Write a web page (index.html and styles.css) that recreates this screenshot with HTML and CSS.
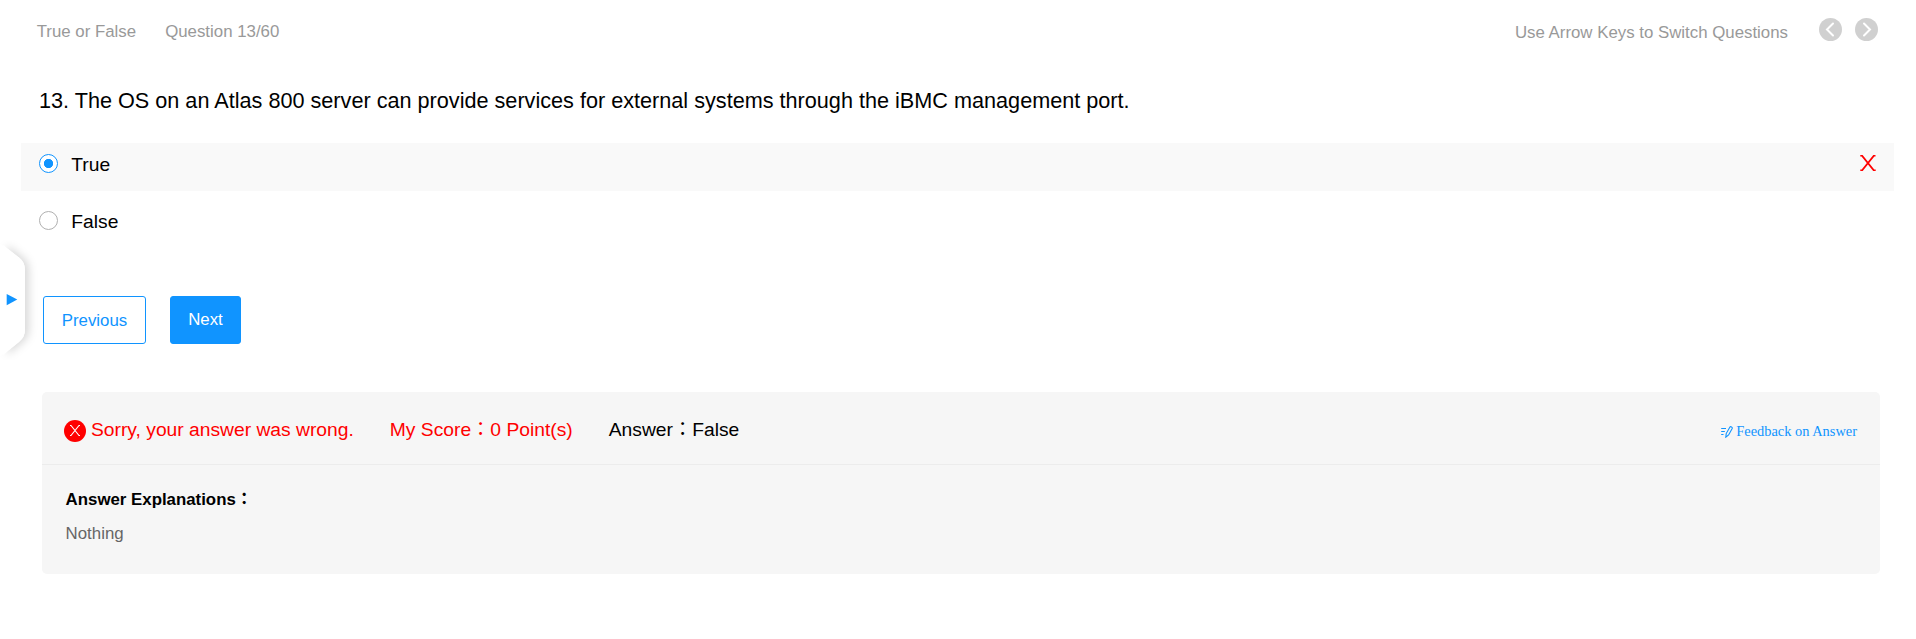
FILE: index.html
```html
<!DOCTYPE html>
<html lang="en">
<head>
<meta charset="utf-8">
<title>Question 13</title>
<link rel="stylesheet" href="styles.css">
</head>
<body>
<header class="topbar">
  <span class="kind">True or False</span>
  <span class="progress">Question 13/60</span>
  <span class="hint">Use Arrow Keys to Switch Questions</span>
  <nav class="arrows">
    <svg width="23" height="23" viewBox="0 0 23 23"><circle cx="11.5" cy="11.5" r="11.5"/><path d="M14 5.5L8 11.5L14 17.5"/></svg>
    <svg width="23" height="23" viewBox="0 0 23 23"><circle cx="11.5" cy="11.5" r="11.5"/><path d="M9 5.5L15 11.5L9 17.5"/></svg>
  </nav>
</header>
<main>
  <h1 class="question">13. The OS on an Atlas 800 server can provide services for external systems through the iBMC management port.</h1>
  <div class="options">
    <label class="option chosen">
      <i class="radio"></i><span>True</span>
      <svg class="cross" width="16" height="16" viewBox="0 0 16 16"><path d="M.3 .6H2L13.8 15.4H15.7M15.5 .6H13.9L2.1 15.4H.3"/></svg>
    </label>
    <label class="option second"><i class="radio"></i><span>False</span></label>
  </div>
  <div class="buttons">
    <button class="btn previous">Previous</button>
    <button class="btn next">Next</button>
  </div>
  <section class="result">
    <div class="summary">
      <svg class="wrong" width="22" height="22" viewBox="0 0 22 22"><circle cx="11" cy="11" r="11"/><path d="M6 5.5H7L15 15.5H16M16 5.5H15L7 15.5H6"/></svg>
      <span class="verdict">Sorry, your answer was wrong.</span>
      <span class="score">My Score：0 Point(s)</span>
      <span class="answer">Answer：False</span>
      <a class="feedback"><svg width="12" height="12" viewBox="0 0 12 12"><path d="M.2 2.5H5M.2 5.5H3.8M.2 8.5H2.5M4.8 11.2L5.2 7.6L8.8 1.2Q9.4 .3 10.5 .9Q11.6 1.5 11.2 2.5L7.6 9Z"/></svg><span>Feedback on Answer</span></a>
    </div>
    <div class="explain">
      <h2>Answer Explanations：</h2>
      <p>Nothing</p>
    </div>
  </section>
</main>
<aside class="drawer">
  <svg width="44" height="120" viewBox="0 0 44 120">
    <path class="tab" d="M3 5L19 17.5Q25 22 25 30V90Q25 97 19 102L3 115Z"/>
    <path class="tabface" d="M0 3L19 17.5Q25 22 25 30V90Q25 97 19 102L0 117Z"/>
    <path class="tri" d="M6.7 54L17.3 59.5L6.7 65.3Z"/>
  </svg>
</aside>
</body>
</html>
```
FILE: styles.css
```css
* { box-sizing: border-box; }
body { margin: 0; background: #fff; color: #000; font-family: "Liberation Sans", "Noto Sans CJK JP", sans-serif; height: 639px; overflow: hidden; position: relative; }
.topbar { display: flex; align-items: flex-start; padding: 18px 38px 0 36.7px; height: 62px; color: #999; font-size: 16.83px; line-height: 26px; }
.kind, .progress { padding-top: 1px; }
.progress { margin-left: 29px; }
.hint { margin-left: auto; padding-top: 2px; }
.arrows { display: flex; gap: 13px; margin-left: 31px; }
.arrows svg { fill: #d0d0d0; }
.arrows path { fill: none; stroke: #fff; stroke-width: 2; stroke-linecap: round; }
.question { margin: 0; padding: 24px 0 0 39px; height: 81px; font-size: 21.65px; font-weight: 400; line-height: 30px; }
.options { padding: 0 22px 0 21px; }
.option { display: flex; align-items: flex-start; height: 48px; padding: 11px 18px 0; font-size: 19.25px; line-height: 22px; }
.chosen { background: #f9f9f9; }
.second { margin-top: 9px; }
.radio { width: 19px; height: 19px; border: 1px solid #b0b0b0; border-radius: 50%; margin-right: 13.3px; background: #fff; }
.chosen .radio { border-color: #1094ff; background: radial-gradient(circle, #1094ff 4.3px, #fff 5px); }
.cross { margin: 1px 0 0 auto; fill: none; stroke: red; stroke-width: 1.7; }
.buttons { display: flex; gap: 24px; padding: 48px 0 0 43px; }
.btn { height: 48px; border: 1px solid #1094ff; border-radius: 3px; font: 16.83px "Liberation Sans", sans-serif; padding: 2px 0 0; }
.previous { width: 103px; background: #fff; color: #1094ff; }
.next { width: 71px; background: #1094ff; color: #fff; padding: 0; }
.result { margin: 48px 36px 0 42px; height: 182px; background: #f6f6f6; border-radius: 5px; }
.summary { display: flex; align-items: flex-start; height: 73px; border-bottom: 1px solid #ececec; padding: 26px 23px 0 22px; font-size: 19.25px; line-height: 24px; white-space: nowrap; }
.wrong { margin: 2px 5px 0 0; fill: red; }
.wrong path { fill: none; stroke: #fff; stroke-width: 1.1; }
.verdict, .score { color: red; }
.score { margin-left: 36px; }
.answer { margin-left: 36px; }
.feedback { display: flex; margin-left: auto; color: #1094ff; font: 14.4px/26px "Liberation Serif", serif; }
.feedback svg { margin: 8px 3px 0 0; fill: none; stroke: #1094ff; stroke-width: 1.1; }
.explain { padding: 22px 23.6px; font-size: 16.83px; line-height: 26px; }
.explain h2 { margin: 0; font-size: 16.83px; font-weight: 700; }
.explain p { margin: 8px 0 0; color: #666; }
.drawer { position: absolute; left: 0; top: 240px; height: 120px; }
.tab { fill: #fff; filter: drop-shadow(4px 0 4px rgba(0,0,0,.15)); }
.tabface { fill: #fff; }
.tri { fill: #1094ff; }
```
